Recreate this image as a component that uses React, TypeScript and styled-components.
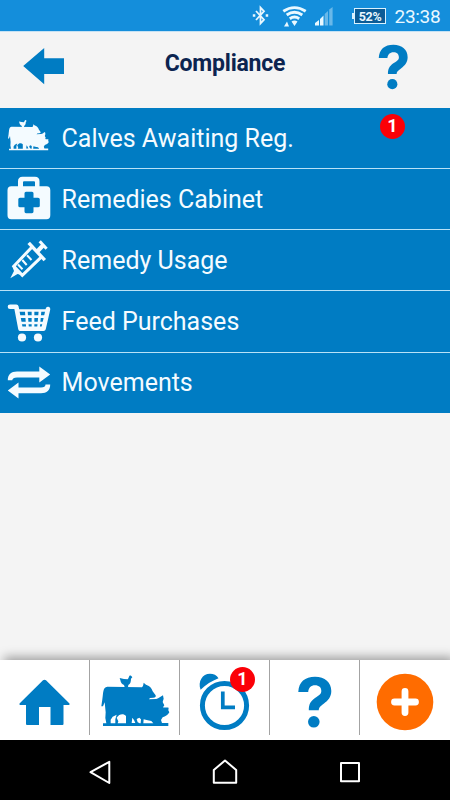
import React from "react";
import styled, { createGlobalStyle } from "styled-components";

const BLUE = "#007cc3";

const GlobalStyle = createGlobalStyle`
  *, *::before, *::after { box-sizing: border-box; }
  body { margin: 0; font-family: Roboto, "Liberation Sans", sans-serif; }
  svg { display: block; flex: none; }
`;

const Screen = styled.div`
  display: flex;
  flex-direction: column;
  width: 450px;
  height: 800px;
  overflow: hidden;
  background: #f4f4f4;
`;

const StatusBar = styled.div`
  display: flex;
  align-items: center;
  justify-content: flex-end;
  height: 31px;
  padding-right: 10.5px;
  background: #148edb;
  color: #e9f8ff;
`;

const Clock = styled.span`
  width: 45px;
  margin-left: 8.5px;
  font-size: 19px;
  letter-spacing: -0.3px;
  line-height: 31px;
  text-align: right;
  white-space: nowrap;
  padding-top: 1px;
`;

const Battery = styled.div`
  position: relative;
  width: 32px;
  height: 16px;
  margin-left: 20px;
  border: 1px solid #d9f2ff;
  background: #0b5c96;
  font-size: 12.5px;
  letter-spacing: -0.3px;
  font-weight: 700;
  line-height: 15px;
  text-align: center;

  &::before {
    content: "";
    position: absolute;
    left: -3px;
    top: 4px;
    width: 2px;
    height: 6px;
    background: #d9f2ff;
  }
`;

const Header = styled.header`
  display: grid;
  grid-template-columns: 110px 1fr 110px;
  height: 77px;
  border-top: 1px solid #c5e2f4;
`;

const Title = styled.h1`
  margin: 0;
  color: #0c2450;
  font-size: 23px;
  letter-spacing: -0.22px;
  font-weight: 700;
  line-height: 63px;
  text-align: center;
`;

const Menu = styled.ul`
  display: flex;
  flex-direction: column;
  margin: 0;
  padding: 0;
  list-style: none;
`;

const MenuRow = styled.li`
  display: flex;
  align-items: center;
  height: 60px;
  background: ${BLUE};
  color: #f4fbff;

  & + & {
    height: 61.2px;
    border-top: 1px solid #b9e2f7;
  }
`;

const RowIcon = styled.span`
  flex: none;
  width: 61.6px;
  height: 60px;
`;

const RowLabel = styled.span`
  flex: 1;
  padding-top: 1.6px;
  font-size: 25px;
  line-height: 60px;
  white-space: nowrap;
`;

const Badge = styled.span`
  display: flex;
  align-items: center;
  justify-content: center;
  width: 25px;
  height: 25px;
  border-radius: 50%;
  background: #fb0007;
  color: #fff;
  font-size: 18px;
  font-weight: 700;
  line-height: 24px;
  padding-bottom: 1px;
`;

const RowBadge = styled(Badge)`
  align-self: flex-start;
  margin: 6px 45px 0 0;
`;

const TabBadge = styled(Badge)`
  position: absolute;
  left: 50px;
  top: 7px;
`;

const Content = styled.main`
  flex: 1;
`;

const TabBar = styled.nav`
  display: grid;
  grid-template-columns: repeat(5, 90px);
  height: 80px;
  background: #fff;
  box-shadow: 4px -3px 10px rgba(0, 0, 0, 0.36);
`;

const Tab = styled.div`
  position: relative;
  height: 75px;

  &:not(:last-child) {
    border-right: 1px solid #a3a3a3;
  }
`;

const SystemBar = styled.div`
  position: relative;
  display: flex;
  justify-content: space-between;
  height: 60px;
  padding: 0 75px;
  background: #000;
`;

function BackArrow() {
  return (
    <svg width="110" height="76" fill={BLUE}>
      <path d="M23.2 34L44.2 16V26.3H64V42H44.2V52.3Z" />
    </svg>
  );
}

function QuestionShape() {
  return (
    <>
      <path d="M.3 15.2C.8 5.2 7 0 17 0C27 0 33.3 5.7 33.3 14.2C33.3 20.2 30 23.7 26 26.7C22 29.7 20.8 30.7 20.8 33.5H10.8C10.8 27.2 12.5 24.7 17 21.2C21.5 18.2 23.3 17.2 23.3 14.2C23.3 10.7 21 8.5 17 8.5C13 8.5 10.5 11.2 10.2 15.2Z" />
      <circle cx="15.8" cy="45" r="5.8" />
    </>
  );
}

function AnimalsShape() {
  return (
    <>
      <path
        fillRule="evenodd"
        d="M52 65L156 67C159 64 160 59 161 53L168 59C178 62 185 68 188 79L197 91Q199 98 190 98L180 99L177 103L199 102C207 100 212 94 219 91L221 101L218 111L223 121L219 127C225 129 229 126 236 128L235 136L238 142C233 151 226 155 218 157L213 165L216 174H235V183H39V175H49L46 159L47 142L44 112L39 124H34L37 103C40 85 38 66 52 65ZM62 175H76L76 163L80 149L68 155L62 164ZM83 175H108V153C101 145 88 146 80 158L85 169ZM127 158L125 174H136L132 165ZM148 158L140 162L143 172L149 175H152L153 163ZM161 163L160 175H190L184 168L170 165Z"
      />
      <path d="M104 66L102 60C96 57 92 53 91 45L89 39L102 42L113 43C116 41 116 35 120 31L124 33L127 37L123 41C123 50 121 57 115 60L114 67Z" />
    </>
  );
}

function CaseIcon() {
  return (
    <svg width="62" height="60" fill="#f4fbff">
      <path
        transform="translate(0 .3)"
        fillRule="evenodd"
        d="M18 17V12Q18 7.5 22.5 7.5H35Q39.5 7.5 39.5 12V17H46.5Q50.3 17 50.3 21V46Q50.3 50 46.5 50H11.3Q7.5 50 7.5 46V21Q7.5 17 11.3 17ZM23 17H35V13Q35 12 34 12H24Q23 12 23 13ZM26 22.5Q24.5 22.5 24.5 24V28.5H20Q18.3 28.5 18.3 30V36.5Q18.3 38 20 38H24.5V42.3Q24.5 44 26 44H32Q33.5 44 33.5 42.3V38H38Q39.8 38 39.8 36.5V30Q39.8 28.5 38 28.5H33.5V24Q33.5 22.5 32 22.5Z"
      />
    </svg>
  );
}

function SyringeIcon() {
  return (
    <svg width="62" height="60" fill="none" stroke="#f4fbff" strokeWidth="3">
      <path d="M28.7 12.8L44.8 30.2" strokeWidth="3.4" />
      <path d="M32 17L13.8 36.2L22.3 45.3L41.5 26.8" />
      <path d="M37.2 21.5L43.2 15.3" strokeWidth="4.2" />
      <path d="M39.7 11.2L46.6 18.8" strokeWidth="3" />
      <path d="M22.3 30L26.7 35M27 25.3L31.5 30M18 34.5L22.5 39.3" strokeWidth="2" />
      <path d="M12 35.5L21.5 45L17.5 44L10.3 48.3L14 41Z" fill="#f4fbff" stroke="none" />
    </svg>
  );
}

function CartIcon() {
  return (
    <svg width="62" height="60" fill="none" stroke="#f4fbff" strokeLinecap="round" strokeLinejoin="round">
      <path d="M10 15.8H16.3L20.5 37.8H43.5L48 18" strokeWidth="4.6" />
      <path d="M18 19.5H46M20 25.7H46M21 32H44M26.3 20L27.5 37M33 20V37M40 20L38.5 37" strokeWidth="2.7" />
      <g fill="#f4fbff" stroke="none">
        <circle cx="22" cy="46.5" r="4.1" />
        <circle cx="38" cy="46.5" r="4.1" />
      </g>
    </svg>
  );
}

function MovementsIcon() {
  return (
    <svg width="62" height="60" fill="#f4fbff">
      <path d="M7.8 27.3C7.8 21.5 11 18.6 17 18.6H39.3V13.5L50.2 21.4L39.3 29.4V24.4H17Q12.5 24.4 12.2 27.3Z" />
      <path d="M50.2 31.6C50.2 37.4 47 40.3 41 40.3H18.5V45.4L7.8 37.5L18.5 29.5V34.5H41Q45.5 34.5 45.5 31.6Z" />
    </svg>
  );
}

function StatusIcons() {
  return (
    <svg width="84" height="31" fill="none" stroke="#e9f8ff">
      <path d="M6 11L14 19.7L10.5 23.5V7.5L14 11.3L6 20" strokeWidth="1.8" />
      <path d="M2.8 15.5H5.3M15.7 15.5H18.2" strokeWidth="2.4" />
      <path d="M33.3 11.2Q44.5 4 55.7 11.2M36.7 15Q44.5 9.5 52.3 15M39.8 18.7Q44.5 15.5 49.2 18.7" strokeWidth="2.9" />
      <g fill="#e9f8ff" stroke="none">
        <path d="M41.5 21.5Q44.5 19.5 47.5 21.5L44.5 26ZM34 26.5L37 21.5L39 26.5Z" />
        <path d="M65 25.5V23L69 20V25.5ZM70 25.5V19L73.5 15.5V25.5Z" />
        <path d="M74.7 25.5V14L78 11V25.5ZM79.2 25.5V9.5L82.6 7V25.5Z" opacity=".4" />
      </g>
    </svg>
  );
}

const rows = [
  {
    label: "Calves Awaiting Reg.",
    badge: "1",
    icon: (
      <svg width="62" height="60" fill="#f4fbff">
        <g transform="translate(1.2 5.7) scale(.2)">
          <AnimalsShape />
        </g>
      </svg>
    ),
  },
  { label: "Remedies Cabinet", icon: <CaseIcon /> },
  { label: "Remedy Usage", icon: <SyringeIcon /> },
  { label: "Feed Purchases", icon: <CartIcon /> },
  { label: "Movements", icon: <MovementsIcon /> },
];

export default function App() {
  return (
    <Screen>
      <GlobalStyle />
      <StatusBar>
        <StatusIcons />
        <Battery>52%</Battery>
        <Clock>23:38</Clock>
      </StatusBar>
      <Header>
        <BackArrow />
        <Title>Compliance</Title>
        <svg width="110" height="76" fill={BLUE}>
          <g transform="translate(38.5 12.8) scale(.875)">
            <QuestionShape />
          </g>
        </svg>
      </Header>
      <Menu>
        {rows.map((row) => (
          <MenuRow key={row.label}>
            <RowIcon>{row.icon}</RowIcon>
            <RowLabel>{row.label}</RowLabel>
            {row.badge && <RowBadge>{row.badge}</RowBadge>}
          </MenuRow>
        ))}
      </Menu>
      <Content />
      <TabBar>
        <Tab>
          <svg width="89" height="75" fill={BLUE}>
            <path d="M43 20.3Q44.5 19 46 20.3L69.5 43.5Q70 45 68.5 45H63.5V64Q63.5 65 62.5 65H50.5V47H39V65H27Q26 65 26 64V45H20.5Q19 45 19.5 43.5Z" />
          </svg>
        </Tab>
        <Tab>
          <svg width="89" height="75" fill={BLUE}>
            <g transform="translate(0 5) scale(.3333)">
              <AnimalsShape />
            </g>
          </svg>
        </Tab>
        <Tab>
          <svg width="89" height="75" fill="none" stroke={BLUE}>
            <circle cx="44.5" cy="45.5" r="22.1" strokeWidth="5" />
            <path d="M42.8 31.5V47.3H55" strokeWidth="3.7" />
            <path d="M20.6 29.8C17.5 21.5 22.5 13.8 30 13.8C33.5 13.8 36.8 15.3 38.5 18.2C32 20.8 25.5 24.6 20.6 29.8Z" fill={BLUE} stroke="none" />
          </svg>
          <TabBadge>1</TabBadge>
        </Tab>
        <Tab>
          <svg width="89" height="75" fill={BLUE}>
            <g transform="translate(28 16.8)">
              <QuestionShape />
            </g>
          </svg>
        </Tab>
        <Tab>
          <svg width="90" height="75">
            <circle cx="45" cy="42" r="28.3" fill="#ff6c00" />
            <path d="M34.5 42H55.5M45 31.5V52.5" stroke="#fff" strokeWidth="6.8" strokeLinecap="round" />
          </svg>
        </Tab>
      </TabBar>
      <SystemBar>
        <svg width="50" height="60" fill="none" stroke="#fff" strokeWidth="2" strokeLinejoin="round">
          <path d="M34.3 21.8V43L15.5 32.2Z" />
        </svg>
        <svg width="50" height="60" fill="none" stroke="#fff" strokeWidth="2" strokeLinejoin="round">
          <path d="M25 20.5L36.2 30V42.8H13.8V30Z" />
        </svg>
        <svg width="50" height="60" fill="none" stroke="#fff" strokeWidth="2" strokeLinejoin="round">
          <rect x="16" y="23" width="18" height="18.2" />
        </svg>
      </SystemBar>
    </Screen>
  );
}
